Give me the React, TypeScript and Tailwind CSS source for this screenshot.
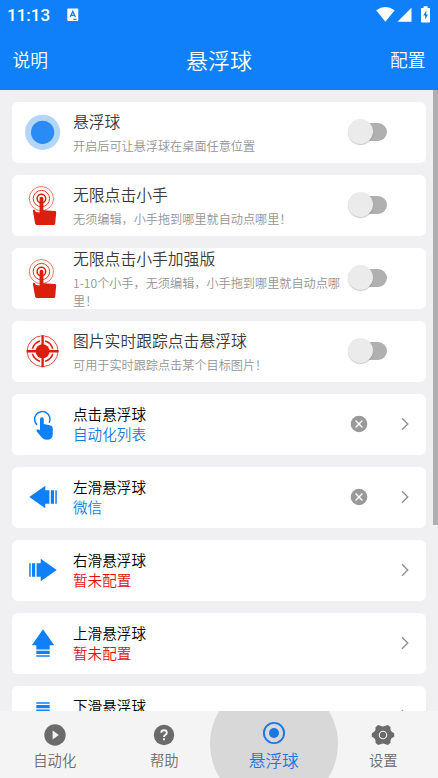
import type { ReactNode } from "react";

const BLUE = "#0f7ffa";
const RED = "#dc1e0c";

function BallIcon() {
  return (
    <svg width={40} height={40} viewBox="0 0 40 40">
      <circle cx="19.6" cy="20.3" r="17.6" fill="#b3d6f8" />
      <circle cx="19.6" cy="20.3" r="11.6" fill="#2b8bf5" />
    </svg>
  );
}

function HandIcon() {
  return (
    <svg width={40} height={40} viewBox="0 0 40 40" fill="none" stroke={RED}>
      <circle cx="18.4" cy="13.6" r="12.1" strokeWidth="0.6" />
      <circle cx="18.4" cy="13.6" r="8.2" strokeWidth="0.9" />
      <circle cx="18.4" cy="13.6" r="4.3" strokeWidth="1.5" />
      <path
        d="M16.6 13.6a1.9 1.9 0 0 1 3.8 0V25.2L32 26Q33.4 26.2 33.2 27.6L32.2 38.4Q32 40 30.6 40H13.6Q12.4 40 12.1 38.6L10 26.5Q9.8 24.4 11 24.4Q12.2 24.5 12.8 27L16.6 27.4Z"
        fill={RED}
        stroke="none"
      />
    </svg>
  );
}

function TargetIcon() {
  return (
    <svg width={40} height={40} viewBox="0 0 40 40" fill="none" stroke={RED}>
      <circle cx="19.6" cy="20.2" r="15.4" strokeWidth="0.8" />
      <circle cx="19.6" cy="20.2" r="10.4" strokeWidth="1.4" />
      <path d="M19.6 5.5v29.4M5 20.2h29.2" stroke="#fff" strokeWidth="5" />
      <circle cx="19.6" cy="20.2" r="7" fill={RED} stroke="none" />
      <path d="M19.6 4.2v32M3.6 20.2h32" strokeWidth="2.4" />
    </svg>
  );
}

function TouchIcon() {
  return (
    <svg width={40} height={40} viewBox="0 0 40 40" fill="none">
      <path d="M14 20.9A7.7 7.7 0 1 1 26.2 18.6" stroke={BLUE} strokeWidth="1.5" />
      <path
        d="M17 15.2a1.9 1.9 0 0 1 3.8 0V20L27.6 21.4Q29.8 22 29.8 24.4V30.5Q29.4 35.8 24 35.8Q20.5 35.8 18.6 33.2L13.7 27.6Q13 25.3 15 25.3L17 26.2Z"
        fill={BLUE}
      />
    </svg>
  );
}

// Points right by default, the other directions are rotations of it.
function ArrowIcon({ turn = "" }: { turn?: string }) {
  return (
    <svg width={40} height={40} viewBox="0 0 40 40" fill={BLUE} className={turn}>
      <path d="M17.7 8.8L33.7 20L17.7 31.2V26.7H13.6V13.3H17.7Z" />
      <path d="M9 13.3h3.2v13.4H9z" />
      <path d="M6.2 13.3h1.5v13.4H6.2z" />
    </svg>
  );
}

function Switch() {
  return (
    <button className="relative mr-[39px] h-[26px] w-[39.5px] shrink-0">
      <span className="absolute right-0 top-1 h-[18px] w-8 rounded-full bg-[#b0b0b0]" />
      <span className="absolute left-0 top-0 size-[25px] rounded-full bg-[#ebebeb] shadow-[0_1px_1px_rgba(0,0,0,0.22)]" />
    </button>
  );
}

function Card({ icon, children }: { icon: ReactNode; children: ReactNode }) {
  return (
    <div className="flex h-[61px] shrink-0 items-center overflow-hidden rounded-md bg-white pb-px">
      <div className="flex w-[61px] shrink-0 justify-center">{icon}</div>
      {children}
    </div>
  );
}

const toggles = [
  { icon: <BallIcon />, title: "悬浮球", desc: "开启后可让悬浮球在桌面任意位置" },
  { icon: <HandIcon />, title: "无限点击小手", desc: "无须编辑，小手拖到哪里就自动点哪里！" },
  {
    icon: <HandIcon />,
    title: "无限点击小手加强版",
    desc: "1-10个小手，无须编辑，小手拖到哪里就自动点哪里！",
  },
  { icon: <TargetIcon />, title: "图片实时跟踪点击悬浮球", desc: "可用于实时跟踪点击某个目标图片！" },
];

const gestures = [
  { icon: <TouchIcon />, title: "点击悬浮球", value: "自动化列表" },
  { icon: <ArrowIcon turn="rotate-180" />, title: "左滑悬浮球", value: "微信" },
  { icon: <ArrowIcon />, title: "右滑悬浮球", value: null },
  { icon: <ArrowIcon turn="-rotate-90" />, title: "上滑悬浮球", value: null },
  { icon: <ArrowIcon turn="rotate-90" />, title: "下滑悬浮球", value: null },
];

function StatusBar() {
  return (
    <div className="flex h-[30px] items-center pl-[7px] pr-[7px]">
      <span className="w-[43px] font-[Roboto] text-[17px] font-medium leading-[30px]">11:13</span>
      <svg width={12} height={14} viewBox="0 0 12 14" className="ml-[17px]">
        <rect x="0.3" y="0.5" width="11" height="12.5" rx="1" fill="#fff" />
        <path d="M3.2 9L5.8 3.4L8.4 9M4.2 7.3h3.2M6.4 11.3h3" fill="none" stroke={BLUE} strokeWidth="1.3" />
      </svg>
      <div className="ml-auto flex items-center pb-0.5">
        <svg width={19} height={15} viewBox="0 0 19 15" fill="#fff">
          <path d="M0.2 3.2Q9.3 -3 18.6 3.2L9.4 14.8Z" />
        </svg>
        <svg width={15} height={15} viewBox="0 0 15 15" className="ml-[2px]" fill="#fff">
          <path d="M0.5 14.8L14.5 0.8V14.8Z" />
        </svg>
        <svg width={9} height={17} viewBox="0 0 9 17" className="ml-[9px] mr-px">
          <path d="M2.6 0.3h4V2H8.2q.8 0 .8.8V15.5q0 .9-.8.9H.8q-.8 0-.8-.9V2.8Q0 2 .8 2h1.8z" fill="#fff" />
          <path d="M5.3 4.5L2.2 9.6H4.2V13.6L7 8.6H5.2Z" fill={BLUE} />
        </svg>
      </div>
    </div>
  );
}

function TabBar() {
  return (
    <nav className="relative grid h-[67px] shrink-0 grid-cols-4 overflow-hidden bg-[#f4f4f4] text-[14.3px] text-[#6b6b6b]">
      <span className="absolute left-[210px] top-[-31px] size-32 rounded-full bg-[#d8d8d8]" />
      <div className="flex flex-col items-center pt-[13px]">
        <svg width={22} height={22} viewBox="0 0 22 22">
          <circle cx="11" cy="11" r="10.7" fill="#6b6b6b" />
          <path d="M8.6 6.4L14.8 11L8.6 15.6Z" fill="#f4f4f4" />
        </svg>
        <span className="mt-1 leading-5">自动化</span>
      </div>
      <div className="flex flex-col items-center pt-[13px]">
        <svg width={22} height={22} viewBox="0 0 22 22">
          <circle cx="11" cy="11" r="10.2" fill="#6b6b6b" />
          <path
            d="M8.2 8.8Q8.3 6.3 11 6.3Q13.8 6.3 13.8 8.7Q13.8 10 12.2 11Q11 11.8 11 13M11 14.3v1.9"
            fill="none"
            stroke="#f4f4f4"
            strokeWidth="1.9"
          />
        </svg>
        <span className="mt-1 leading-5">帮助</span>
      </div>
      <div className="relative flex flex-col items-center pt-[10px] text-[#1a76e0]">
        <svg width={24} height={24} viewBox="0 0 24 24">
          <circle cx="12" cy="12" r="10.1" fill="none" stroke="#1a76e0" strokeWidth="1.9" />
          <circle cx="12" cy="12" r="5" fill="#1a76e0" />
        </svg>
        <span className="mt-[4px] text-[16.7px] leading-[22px]">悬浮球</span>
      </div>
      <div className="flex flex-col items-center pt-[13px]">
        <svg width={24} height={22} viewBox="0 0 24 22">
          <path
            d="M7 .9L9.6 1.8Q12 3.3 14.4 1.8L17 .9L19.5 3.2Q19 7 21.8 8.4L23.2 9.2V12.8L21.8 13.6Q19 15 19.5 18.8L17 21.1L14.4 20.2Q12 18.7 9.6 20.2L7 21.1L4.5 18.8Q5 15 2.2 13.6L.8 12.8V9.2L2.2 8.4Q5 7 4.5 3.2Z"
            fill="#6b6b6b"
          />
          <circle cx="12" cy="11" r="3.7" fill="none" stroke="#f4f4f4" strokeWidth="1.1" />
        </svg>
        <span className="mt-1 leading-5">设置</span>
      </div>
    </nav>
  );
}

export default function App() {
  return (
    <div className="flex h-[778px] w-[438px] flex-col overflow-hidden bg-[#f0f0f3] font-['Noto_Sans_CJK_SC',sans-serif] font-[350]">
      <header className="h-[90px] shrink-0 bg-[#0f7ffa] text-white">
        <StatusBar />
        <div className="grid h-[60px] grid-cols-3 items-center px-[12.5px] pb-[2px] text-[17.7px]">
          <span>说明</span>
          <h1 className="text-center text-[22px]">悬浮球</h1>
          <span className="text-right">配置</span>
        </div>
      </header>

      <main className="relative min-h-0 flex-1 overflow-hidden">
        <div className="flex flex-col gap-3 p-3">
          {toggles.map((item) => (
            <Card key={item.title} icon={item.icon}>
              <div className="min-w-0 flex-1 pb-px">
                <div className="text-[15.8px] leading-[25px] text-[#3a3a3a]">{item.title}</div>
                <div className="mt-[3px] text-[12.15px] leading-[18px] text-[#949494]">{item.desc}</div>
              </div>
              <Switch />
            </Card>
          ))}
          {gestures.map((item) => (
            <Card key={item.title} icon={item.icon}>
              <div className="flex-1 pb-px text-[14.6px] leading-5">
                <div className="text-black">{item.title}</div>
                {item.value ? (
                  <div className="text-[#1a7ad9]">{item.value}</div>
                ) : (
                  <div className="text-[#e01010]">暂未配置</div>
                )}
              </div>
              {item.value && (
                <svg width={18} height={18} viewBox="0 0 18 18" className="mr-[33px]">
                  <circle cx="9" cy="9" r="8.3" fill="#999" />
                  <path d="M5.6 5.6l6.8 6.8M12.4 5.6l-6.8 6.8" stroke="#fff" strokeWidth="1.4" />
                </svg>
              )}
              <svg width={8} height={14} viewBox="0 0 8 14" className="mr-[17px]" fill="none">
                <path d="M1 1.2L6.8 7L1 12.8" stroke="#8c8c8c" strokeWidth="1.3" />
              </svg>
            </Card>
          ))}
        </div>
        <div className="absolute right-0 top-0 h-[435px] w-[5px] bg-[#afafb1]" />
      </main>

      <TabBar />
    </div>
  );
}
